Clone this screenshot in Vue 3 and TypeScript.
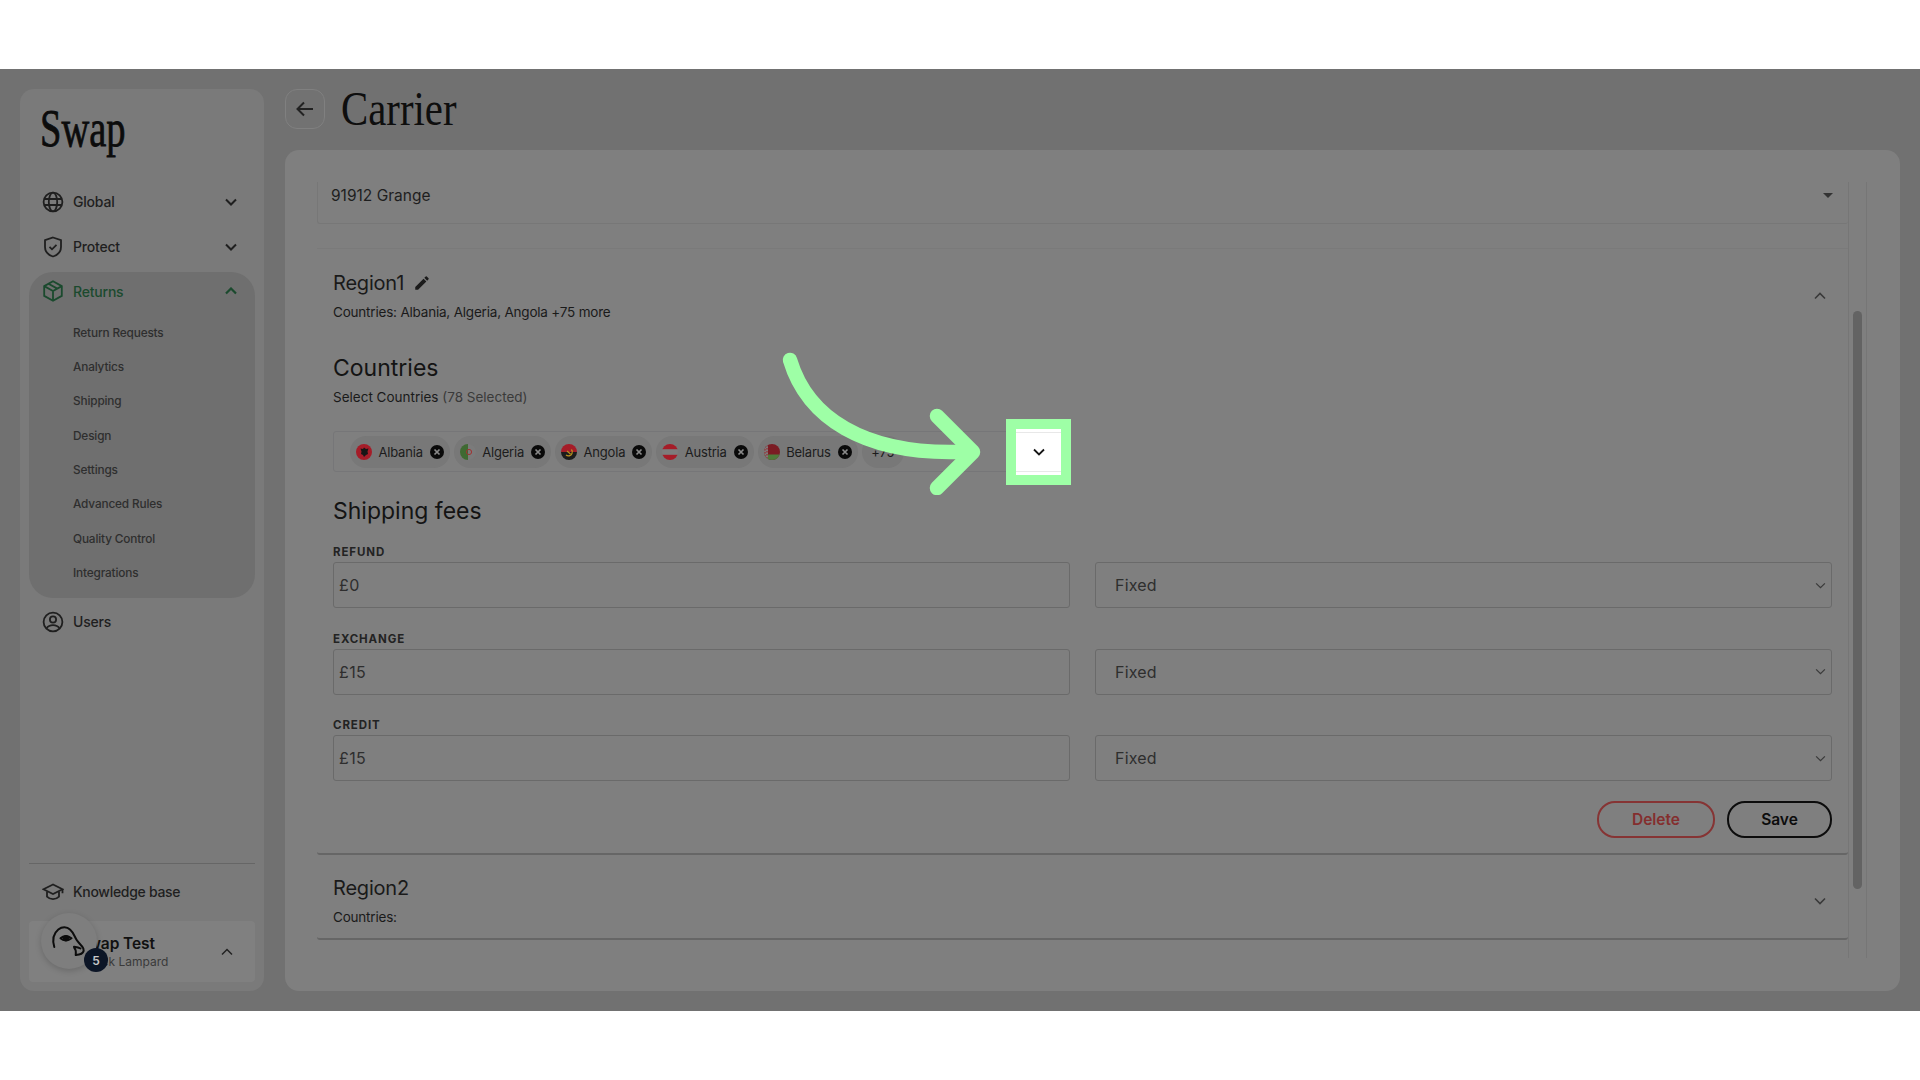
<script setup lang="ts">
const subItems: string[] = ['Return Requests', 'Analytics', 'Shipping', 'Design', 'Settings', 'Advanced Rules', 'Quality Control', 'Integrations']
const fees = [
  { label: 'REFUND', value: '£0' },
  { label: 'EXCHANGE', value: '£15' },
  { label: 'CREDIT', value: '£15' },
]
const chips: string[] = ['Albania', 'Algeria', 'Angola', 'Austria', 'Belarus']
</script>

<template>
  <div class="page">
    <div class="band"></div>
    <div class="stage">
      <aside class="sidebar">
        <div class="logo"><span>Swap</span></div>
        <div class="nav-item">
          <svg class="nav-icon" viewBox="0 0 22 22" fill="none" stroke="currentColor" stroke-width="1.8"><circle cx="11" cy="11" r="9.4"/><ellipse cx="11" cy="11" rx="4.2" ry="9.4"/><path d="M2 8h18M2 14h18"/></svg>
          <span class="nav-label">Global</span>
          <svg class="chev" viewBox="0 0 12 8" fill="none" stroke="currentColor" stroke-width="2"><path d="M1 1.500l5 5 5-5"/></svg>
        </div>
        <div class="nav-item">
          <svg class="nav-icon" viewBox="0 0 22 22" fill="none" stroke="currentColor" stroke-width="1.8"><path d="M11 1.500l8 2.600v7c0 4.800-3.300 7.900-8 9.400-4.700-1.500-8-4.600-8-9.400v-7z"/><path d="M7.500 10.800l2.500 2.500 4.500-4.500"/></svg>
          <span class="nav-label">Protect</span>
          <svg class="chev" viewBox="0 0 12 8" fill="none" stroke="currentColor" stroke-width="2"><path d="M1 1.500l5 5 5-5"/></svg>
        </div>
        <div class="group">
          <div class="group-head">
            <svg class="nav-icon" viewBox="0 0 22 22" fill="none" stroke="currentColor" stroke-width="1.8"><path d="M11 1.200l8.800 4.900v9.800L11 20.800l-8.800-4.900V6.100z"/><path d="M2.200 6.100L11 11l8.800-4.900M11 11v9.800M6.500 3.700l8.800 4.900"/></svg>
            <span class="nav-label">Returns</span>
            <svg class="chev" viewBox="0 0 12 8" fill="none" stroke="currentColor" stroke-width="2.200"><path d="M1 6.500l5-5 5 5"/></svg>
          </div>
          <div v-for="s in subItems" :key="s" class="sub-item">{{ s }}</div>
        </div>
        <div class="nav-item">
          <svg class="nav-icon" viewBox="0 0 22 22" fill="none" stroke="currentColor" stroke-width="1.8"><circle cx="11" cy="11" r="9.400"/><circle cx="11" cy="8.500" r="3.100"/><path d="M4.500 17.500c1.500-2.400 3.800-3.300 6.500-3.300s5 .9 6.500 3.300"/></svg>
          <span class="nav-label">Users</span>
        </div>
        <div class="spacer"></div>
        <div class="side-rule"></div>
        <div class="kb">
          <svg class="nav-icon" viewBox="0 0 22 18" fill="none" stroke="currentColor" stroke-width="1.800"><path d="M11 1.500L1.500 6.300 11 11l9.500-4.700z"/><path d="M5 8.500v5.200c1.700 1.700 3.700 2.500 6 2.500s4.300-.8 6-2.500V8.500M20.500 6.300v4"/></svg>
          <span class="nav-label">Knowledge base</span>
        </div>
        <div class="user">
          <div class="user-text">
            <div class="user-name">Swap Test</div>
            <div class="user-sub">Jack Lampard</div>
          </div>
          <svg class="user-chev" viewBox="0 0 12 8" fill="none" stroke="currentColor" stroke-width="1.500"><path d="M1 6.500l5-5 5 5"/></svg>
          <div class="avatar">
            <svg viewBox="0 0 56 56" width="56" height="56" fill="none" stroke="#0c0c0c" stroke-width="2" stroke-linecap="round" stroke-linejoin="round"><path d="M13.300 34C11 26 13 20 17.300 16.500C21 13.500 26 13.500 29 16.500C32.500 19.500 33.500 23.500 35.700 27C37.500 30 41 32.500 42.300 35.300C43.500 38.500 41.500 41 38 41.500L34.800 42"/><path d="M34.800 42L34.800 38.500C35 36.500 33 35.500 33 33.700C35.500 34 38 34.500 39.500 35.500"/><path d="M19.500 25.300C22.500 22.500 27 22.500 30.500 25.300C27 28 22.500 28 19.500 25.300z"/><circle cx="25" cy="25.300" r="2.300" fill="#0c0c0c"/></svg>
          </div>
          <div class="badge">5</div>
        </div>
      </aside>

      <main class="main">
        <header class="head">
          <button class="back">
            <svg viewBox="0 0 20 20" width="20" height="20" fill="none" stroke="#222" stroke-width="2"><path d="M18 10H2.500M9 3.500L2.500 10 9 16.500"/></svg>
          </button>
          <h1 class="title"><span>Carrier</span></h1>
        </header>
        <section class="card">
          <div class="scroll">
            <div class="content">
              <div class="top-select">
                <span>91912 Grange</span>
                <i class="caret"></i>
              </div>
              <div class="region open">
                <div class="region-head">
                  <div class="region-text">
                    <div class="region-name">Region1
                      <svg viewBox="0 0 24 24" width="18" height="18" fill="#1b1b1b"><path d="M3 17.250V21h3.750L17.810 9.940l-3.750-3.750zM20.710 7.040a1 1 0 0 0 0-1.410l-2.340-2.340a1 1 0 0 0-1.410 0l-1.830 1.830 3.750 3.750z"/></svg>
                    </div>
                    <div class="region-sub">Countries: Albania, Algeria, Angola +75 more</div>
                  </div>
                  <svg class="region-chev" viewBox="0 0 12 8" fill="none" stroke="currentColor" stroke-width="1.600"><path d="M1 6.500l5-5 5 5"/></svg>
                </div>
                <h2 class="h-countries">Countries</h2>
                <div class="select-label">Select Countries <span>(78 Selected)</span></div>
                <div class="chips">
                  <div v-for="c in chips" :key="c" class="chip">
                    <svg class="flag" viewBox="0 0 16 16">
                      <defs><clipPath id="fc"><circle cx="8" cy="8" r="8"/></clipPath></defs>
                      <g clip-path="url(#fc)">
                        <template v-if="c === 'Albania'">
                          <rect width="16" height="16" fill="#a51c28"/>
                          <path d="M8 3.500l2 1.500 2.500-.5-1 3 .5 2.500-2 1L8 13l-1-2-2-1 .5-2.500-1-3 2.500.5z" fill="#161616"/>
                        </template>
                        <template v-else-if="c === 'Algeria'">
                          <rect width="16" height="16" fill="#7b7b7b"/>
                          <rect width="8" height="16" fill="#3f6a32"/>
                          <circle cx="9" cy="8" r="2.600" fill="none" stroke="#a03232" stroke-width="1"/>
                        </template>
                        <template v-else-if="c === 'Angola'">
                          <rect width="16" height="8" fill="#a51c28"/>
                          <rect y="8" width="16" height="8" fill="#1c1c1c"/>
                          <path d="M5 11c2 1.500 5 1 6-1.500.7-1.500.3-3-.6-4" fill="none" stroke="#b89020" stroke-width="1.300"/>
                          <path d="M6 7l3.500 3" stroke="#b89020" stroke-width="1.200"/>
                        </template>
                        <template v-else-if="c === 'Austria'">
                          <rect width="16" height="16" fill="#7c7c7c"/>
                          <rect width="16" height="5.200" fill="#a51c28"/>
                          <rect y="10.800" width="16" height="5.200" fill="#a51c28"/>
                        </template>
                        <template v-else>
                          <rect width="16" height="16" fill="#7b1c24"/>
                          <rect y="10.500" width="16" height="5.500" fill="#4f7a3a"/>
                          <rect width="4" height="16" fill="#7c7c7c"/>
                          <path d="M1 2v12M3 1v14" stroke="#9a2a30" stroke-width="1.200" stroke-dasharray="1.500 1.500"/>
                        </template>
                      </g>
                    </svg>
                    <span>{{ c }}</span>
                    <svg class="chip-x" viewBox="0 0 14 14"><circle cx="7" cy="7" r="7" fill="#0a0a0a"/><path d="M4.500 4.500l5 5M9.500 4.500l-5 5" stroke="#8a8a8a" stroke-width="1.700"/></svg>
                  </div>
                  <div class="chip more">+75</div>
                  <div class="spot">
                    <div class="spot-inner">
                      <svg viewBox="0 0 12 8" width="12" height="8" fill="none" stroke="#161616" stroke-width="1.800"><path d="M1 1.500l5 5 5-5"/></svg>
                    </div>
                  </div>
                </div>
                <h2 class="h-fees">Shipping fees</h2>
                <div v-for="f in fees" :key="f.label" class="fee">
                  <label class="fee-label">{{ f.label }}</label>
                  <div class="fee-row">
                    <div class="field">{{ f.value }}</div>
                    <div class="field sel">
                      <span>Fixed</span>
                      <svg viewBox="0 0 12 8" width="11" height="7" fill="none" stroke="#3a3a3a" stroke-width="1.400"><path d="M1 1.500l5 5 5-5"/></svg>
                    </div>
                  </div>
                </div>
                <div class="actions">
                  <button class="btn del">Delete</button>
                  <button class="btn save">Save</button>
                </div>
              </div>
              <div class="region closed">
                <div class="region-head">
                  <div class="region-text">
                    <div class="region-name">Region2</div>
                    <div class="region-sub">Countries:</div>
                  </div>
                  <svg class="region-chev" viewBox="0 0 12 8" fill="none" stroke="currentColor" stroke-width="1.600"><path d="M1 1.500l5 5 5-5"/></svg>
                </div>
              </div>
            </div>
            <div class="track"><div class="thumb"></div></div>
          </div>
        </section>
      </main>
      <svg class="arrow" viewBox="780 350 205 145" fill="none" stroke="#9effa6" stroke-width="14.500" stroke-linecap="round" stroke-linejoin="round">
        <path d="M790 360C808 420 866 452 950 452L972 452"/>
        <path d="M937 416L973 452L937 488"/>
      </svg>
    </div>
    <div class="band"></div>
  </div>
</template>

<style>
html, body { margin: 0; background: #fff; }
</style>

<style scoped>
.page { width: 1920px; height: 1080px; display: flex; flex-direction: column; font-family: Inter, "Liberation Sans", sans-serif; color: #1c1c1c; overflow: hidden; }
.band { height: 69px; background: #fff; flex: none; }
.stage { position: relative; height: 942px; flex: none; background: #717171; display: flex; gap: 21px; padding: 20px; box-sizing: border-box; }
.arrow { position: absolute; left: 780px; top: 281px; width: 205px; height: 145px; }

.sidebar { width: 244px; flex: none; background: #7a7a7a; border-radius: 14px; padding: 0 9px; box-sizing: border-box; display: flex; flex-direction: column; }
.logo { height: 90px; flex: none; padding-left: 11px; font-family: "Liberation Serif", serif; font-size: 52px; line-height: 1; color: #0c0c0c; }
.logo span { display: inline-block; margin-top: 14px; transform: scaleX(.74); transform-origin: left; -webkit-text-stroke: .8px #0c0c0c; }
.nav-item { height: 45px; flex: none; display: flex; align-items: center; padding-left: 13px; color: #1f1f1f; box-sizing: border-box; }
.nav-icon { width: 22px; height: 22px; flex: none; }
.nav-label { margin-left: 9px; font-size: 14px; font-weight: 500; flex: 1; letter-spacing: -.2px; }
.chev { width: 12px; height: 8px; margin-right: 18px; flex: none; }
.group { margin-top: 2.500px; background: #6f6f6f; border-radius: 24px; height: 326px; flex: none; box-sizing: border-box; margin-bottom: 1.500px; }
.group-head { height: 39px; display: flex; align-items: center; padding-left: 13px; color: #1b4a2e; margin-bottom: 5px; }
.sub-item { height: 34.400px; line-height: 34.400px; padding-left: 44px; font-size: 11.800px; font-weight: 500; color: #2e2e2e; letter-spacing: -.15px; }
.spacer { flex: 1; }
.side-rule { height: 1px; background: #666; flex: none; }
.kb { height: 55px; flex: none; margin-bottom: 2px; display: flex; align-items: center; padding-left: 13px; color: #1f1f1f; }
.kb .nav-icon { height: 18px; width: 22px; }
.kb .nav-label { margin-left: 9px; letter-spacing: -.3px; }
.user { position: relative; height: 61px; flex: none; margin-bottom: 9px; background: #808080; border-radius: 4px; display: flex; align-items: center; }
.user-text { margin-left: 49px; flex: 1; }
.user-name { font-size: 15.500px; font-weight: 600; line-height: 20px; color: #111; letter-spacing: -.1px; }
.user-sub { font-size: 12px; line-height: 16px; color: #3a3a3a; margin-left: 10px; }
.user-chev { width: 12px; height: 8px; color: #222; margin-right: 22px; flex: none; }
.avatar { position: absolute; left: 12px; top: -8px; width: 56px; height: 56px; border-radius: 50%; background: #7e7e7e; box-shadow: 0 2px 6px rgba(0,0,0,.18); }
.badge { position: absolute; left: 55px; top: 27px; width: 24px; height: 24px; border-radius: 50%; background: #0c1526; color: #c8c8c8; font-size: 12px; font-weight: 600; display: flex; align-items: center; justify-content: center; }

.main { flex: 1; min-width: 0; display: flex; flex-direction: column; gap: 21px; }
.head { height: 40px; flex: none; display: flex; align-items: center; gap: 16px; }
.back { width: 40px; height: 40px; box-sizing: border-box; background: #727272; border: 1px solid #808080; border-radius: 12px; display: flex; align-items: center; justify-content: center; padding: 0; }
.title { margin: 0; font-family: "Liberation Serif", serif; font-weight: 400; font-size: 48px; line-height: 40px; color: #0e0e0e; }
.title span { display: inline-block; transform: scaleX(.85); transform-origin: left; }
.card { flex: 1; min-height: 0; background: #7f7f7f; border-radius: 14px; padding: 32px 33px 33px 32px; box-sizing: border-box; }
.scroll { height: 100%; display: flex; }
.content { flex: 1; min-width: 0; }
.track { width: 19px; flex: none; box-sizing: border-box; border-left: 1px solid #767676; border-right: 1px solid #767676; padding: 129px 4px 69px; }
.thumb { height: 100%; background: #636363; border-radius: 5px; }

.top-select { height: 42px; box-sizing: border-box; border-left: 1px solid #777; border-bottom: 1px solid #777; border-radius: 0 0 3px 3px; display: flex; align-items: center; justify-content: space-between; padding: 0 15px 15px 13px; font-size: 15.500px; color: #1e1e1e; }
.caret { width: 0; height: 0; border-left: 5px solid transparent; border-right: 5px solid transparent; border-top: 5px solid #333; }
.region { box-sizing: border-box; padding: 0 16px; border-radius: 0 0 3px 3px; }
.region.open { margin-top: 24px; height: 607px; border-top: 1px solid #7a7a7a; border-bottom: 2px solid #666; padding-top: 20px; }
.region.closed { height: 85px; border-bottom: 2px solid #666; padding-top: 19px; }
.region-head { display: flex; justify-content: space-between; align-items: center; height: 53px; }
.region-name { font-size: 20px; line-height: 26px; color: #1a1a1a; display: flex; align-items: center; gap: 9px; letter-spacing: -.2px; }
.region-sub { font-size: 13.500px; line-height: 18px; margin-top: 7px; color: #1a1a1a; letter-spacing: -.2px; }
.region-chev { width: 12px; height: 8px; color: #3a3a3a; margin-right: 6px; }
.h-countries, .h-fees { margin: 0; font-size: 23px; font-weight: 400; line-height: 28px; color: #141414; }
.h-countries { margin-top: 32px; }
.select-label { font-size: 13.500px; line-height: 18px; margin-top: 6px; color: #1a1a1a; }
.select-label span { color: #3a3a3a; }
.chips { position: relative; width: 738px; height: 41px; box-sizing: border-box; margin-top: 25px; border: 1px solid #767678; border-radius: 3px; display: flex; align-items: center; gap: 4px; padding-left: 16px; }
.chip { height: 32px; box-sizing: border-box; background: #787878; border-radius: 16px; display: flex; align-items: center; padding: 0 6px 0 6px; font-size: 13px; color: #1c1c1c; letter-spacing: -.2px; }
.flag { width: 16px; height: 16px; margin-right: 6.500px; flex: none; }
.chip-x { width: 14px; height: 14px; margin-left: 7px; flex: none; }
.chip.more { width: 42px; justify-content: center; padding: 0; }
.spot { position: absolute; left: 672px; top: -13px; width: 65px; height: 66px; box-sizing: border-box; border: 10px solid #9effa6; background: #fff; }
.spot-inner { box-sizing: border-box; height: 40px; margin-top: 3px; border-top: 1px solid #e8e8e8; border-bottom: 1px solid #e8e8e8; display: flex; align-items: center; justify-content: center; }
.h-fees { margin-top: 25px; }
.fee { margin-top: 20px; }
.fee + .fee { margin-top: 23.500px; }
.fee-label { display: block; font-size: 11.500px; font-weight: 700; line-height: 14px; color: #232323; letter-spacing: .9px; margin-bottom: 3px; }
.fee-row { display: grid; grid-template-columns: 737px 737px; gap: 25px; }
.field { height: 46px; box-sizing: border-box; border: 1px solid #6a6a6a; border-radius: 3px; display: flex; align-items: center; padding-left: 5px; font-size: 16px; color: #2e2e2e; letter-spacing: .4px; }
.field.sel { justify-content: space-between; padding: 0 5px 0 19px; letter-spacing: .2px; }
.actions { display: flex; justify-content: flex-end; gap: 12px; margin-top: 20px; }
.btn { height: 37px; border-radius: 18px; background: transparent; font-family: Inter, sans-serif; font-size: 15.500px; font-weight: 600; box-sizing: border-box; padding: 0; }
.del { width: 118px; border: 2px solid #863434; color: #842e2e; }
.save { width: 105px; border: 2px solid #0c0c0c; color: #0c0c0c; }
</style>
